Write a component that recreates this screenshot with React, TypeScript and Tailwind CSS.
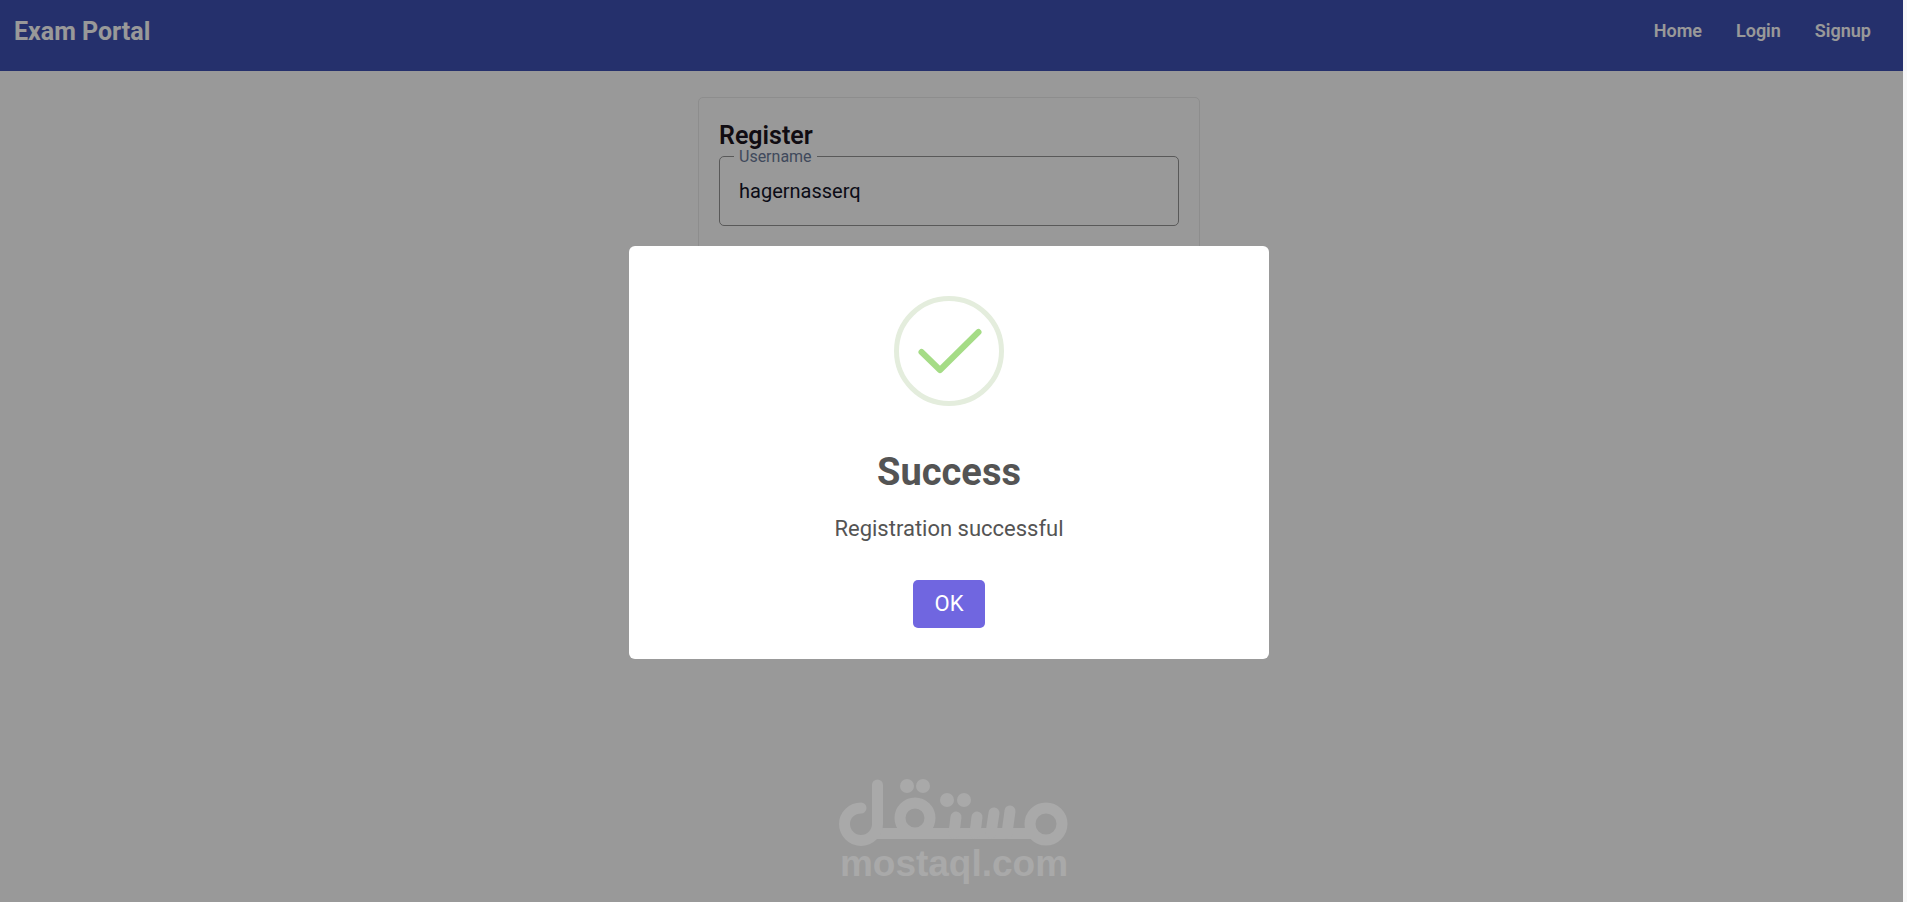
import { useState } from "react";

const links = ["Home", "Login", "Signup"];

const Navbar = () => {
  return (
    <header className="flex h-[71px] items-start justify-between bg-[#3f51b5] pt-4 pr-8 pl-3.5 text-white">
      <a href="/" className="text-[25px] leading-8 font-bold">
        Exam Portal
      </a>
      <nav className="flex gap-[34px] text-lg leading-[30px] font-semibold">
        {links.map((link) => (
          <a key={link} href={"/" + link.toLowerCase()}>
            {link}
          </a>
        ))}
      </nav>
    </header>
  );
};

const RegisterForm = () => {
  const [username, setUsername] = useState("hagernasserq");

  return (
    <main className="mt-[26px] flex justify-center pr-[5px]">
      <form className="h-[420px] w-[502px] rounded-[5px] border border-[#ebebeb] px-5 pt-[26px]">
        <h1 className="text-[25px] leading-6 font-semibold text-[#1b1420]">
          Register
        </h1>
        <fieldset className="h-[78px] rounded-[5px] border border-[#949494] px-[14px]">
          <legend className="h-4 px-[5px] text-base leading-[18px] text-[#6b7a99]">
            <label htmlFor="username">Username</label>
          </legend>
          <input
            id="username"
            value={username}
            onChange={(e) => setUsername(e.target.value)}
            className="mt-3 block w-full px-[5px] text-xl leading-[30px] text-[#141428] outline-none"
          />
        </fieldset>
      </form>
    </main>
  );
};

const SuccessIcon = () => {
  return (
    <svg width="110" height="110" viewBox="0 0 110 110" fill="none" aria-hidden="true">
      <circle cx="55" cy="55" r="52.5" stroke="#e4eddd" strokeWidth="5" />
      <path
        d="M27.5 56L46 74L84.5 36"
        stroke="#a5dc86"
        strokeWidth="6"
        strokeLinecap="round"
        strokeLinejoin="round"
      />
    </svg>
  );
};

const SuccessDialog = () => {
  return (
    <div className="absolute inset-0 flex items-center justify-center bg-black/40 pt-[3px] pr-[5px]">
      <div
        role="dialog"
        aria-labelledby="dialog-title"
        className="flex w-[640px] flex-col items-center rounded-md bg-white pt-[50px] pb-[31px] text-[#545454]"
      >
        <SuccessIcon />
        <h2 id="dialog-title" className="mt-[43px] text-[38px] leading-[46px] font-bold">
          Success
        </h2>
        <p className="mt-5 text-[22px] leading-7">Registration successful</p>
        <button
          type="button"
          className="mt-[37px] h-12 w-[72px] rounded-[5px] bg-[#7066e0] pb-0.5 text-[22px] text-white"
        >
          OK
        </button>
      </div>
    </div>
  );
};

const Watermark = () => {
  return (
    <div className="absolute inset-x-0 bottom-[21px] flex justify-center pl-[5px]">
      <div className="flex flex-col items-center text-[#a9a9a9]">
        <svg width="230" height="68" viewBox="0 0 230 68" fill="none" aria-hidden="true">
          <g stroke="currentColor" strokeWidth="11">
            <circle cx="207" cy="45" r="16" />
            <circle cx="76" cy="39" r="15" />
            <path d="M195 54.5H36" />
            <path d="M22 29C13 29 5.500 36 5.500 45S13 61.500 22 61.500S38.500 54 38.500 45V6" strokeLinecap="round" />
          </g>
          <g stroke="currentColor" strokeWidth="11" strokeLinecap="round">
            <path d="M117 38L115 54M138 38L136 54M155 34L152 54M171 32L168 54" />
          </g>
          <g fill="currentColor">
            <circle cx="68" cy="7" r="7" />
            <circle cx="84" cy="7" r="7" />
            <circle cx="108" cy="21" r="7" />
            <circle cx="125" cy="21" r="7" />
          </g>
        </svg>
        <span className="font-['Liberation_Sans',sans-serif] text-[37px] leading-[34px] font-bold">
          mostaql.com
        </span>
      </div>
    </div>
  );
};

const App = () => {
  return (
    <div className="min-h-screen bg-[#f8f8f8] pr-1 font-[Roboto,sans-serif]">
      <div className="relative min-h-screen overflow-hidden bg-white">
        <Navbar />
        <RegisterForm />
        <SuccessDialog />
        <Watermark />
      </div>
    </div>
  );
};

export default App;
